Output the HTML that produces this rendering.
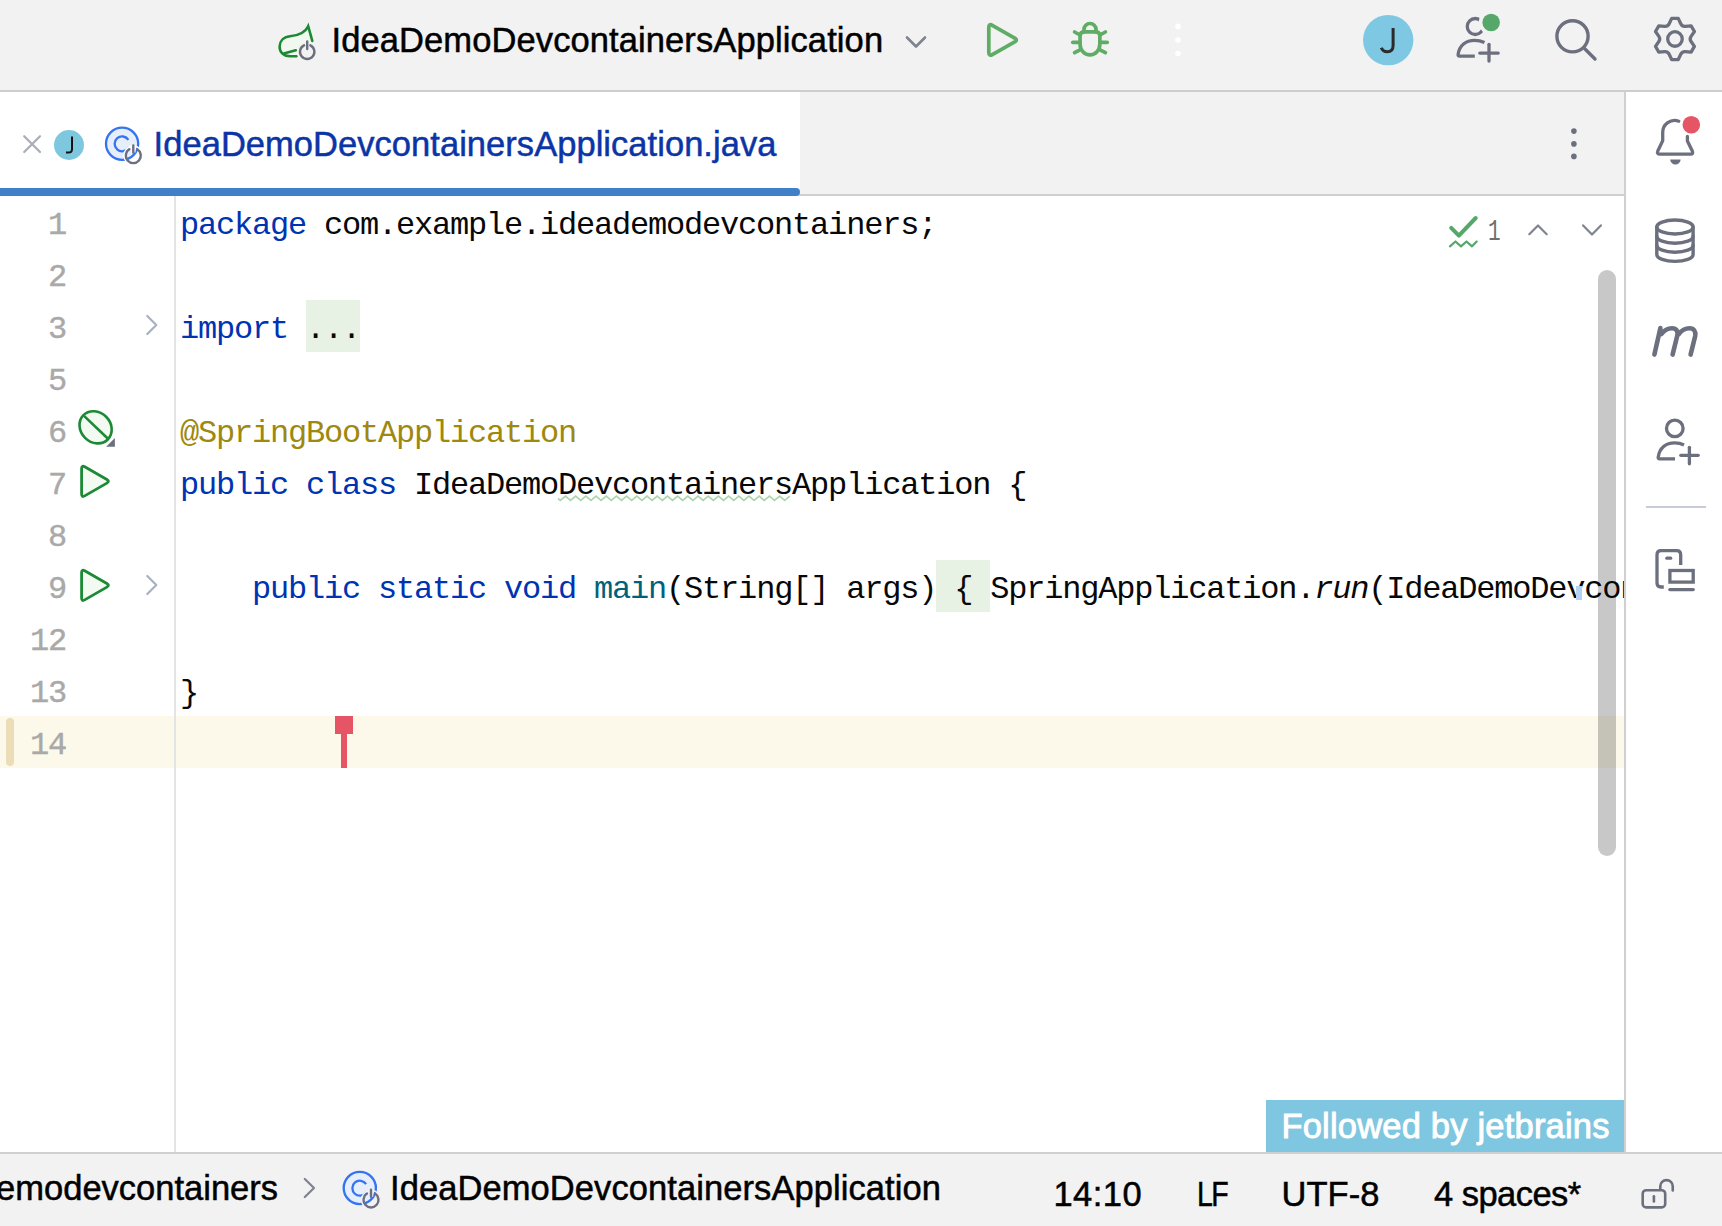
<!DOCTYPE html>
<html><head><meta charset="utf-8">
<style>
html,body{margin:0;padding:0;}
body{width:1722px;height:1226px;position:relative;overflow:hidden;background:#fff;font-family:"Liberation Sans",sans-serif;}
.a{position:absolute;}
.ui{position:absolute;font-family:"Liberation Sans",sans-serif;white-space:nowrap;line-height:1;-webkit-text-stroke:0.5px currentColor;}
.code{position:absolute;left:180px;font-family:"Liberation Mono",monospace;font-size:32px;letter-spacing:-1.2px;white-space:pre;line-height:52px;height:52px;color:#080808;}
.ln{position:absolute;left:30px;width:36px;text-align:right;font-family:"Liberation Mono",monospace;font-size:32px;letter-spacing:-1.2px;white-space:pre;line-height:52px;height:52px;color:#a9a9a9;-webkit-text-stroke:0.4px #a9a9a9;}
.kw{color:#0033b3;}
.an{color:#9e880d;}
.fn{color:#00627a;}
svg{position:absolute;overflow:visible;}
</style></head><body>

<!-- TOP BAR -->
<div class="a" style="left:0;top:0;width:1722px;height:90px;background:#f2f2f2;"></div>
<div class="a" style="left:0;top:90px;width:1722px;height:2px;background:#cdcdcd;"></div>

<!-- TAB BAR -->
<div class="a" style="left:0;top:92px;width:1624px;height:102px;background:#f2f2f2;"></div>
<div class="a" style="left:0;top:92px;width:800px;height:102px;background:#ffffff;"></div>
<div class="a" style="left:0;top:194px;width:1624px;height:2px;background:#d0d0d0;"></div>
<div class="a" style="left:0;top:188px;width:800px;height:8px;background:#3f80c9;border-radius:0 4px 4px 0;"></div>

<!-- RIGHT STRIP -->
<div class="a" style="left:1624px;top:92px;width:2px;height:1060px;background:#d0d0d0;"></div>

<!-- EDITOR -->
<div class="a" style="left:0;top:716px;width:1624px;height:52px;background:#fcf9eb;"></div>
<div class="a" style="left:174px;top:196px;width:2px;height:956px;background:#e4e4e4;"></div>
<div class="a" style="left:6px;top:718px;width:8px;height:48px;background:#ecdcb8;border-radius:4px;"></div>

<!-- CODE -->
<div class="a" style="left:306px;top:300px;width:54px;height:52px;background:#e8f2e4;"></div>
<div class="a" style="left:936px;top:560px;width:54px;height:52px;background:#e8f2e4;"></div>
<div class="a" style="left:0;top:0;width:1624px;height:1152px;overflow:hidden;">
<div class="ln" style="top:200px">1</div>
<div class="ln" style="top:252px">2</div>
<div class="ln" style="top:304px">3</div>
<div class="ln" style="top:356px">5</div>
<div class="ln" style="top:408px">6</div>
<div class="ln" style="top:460px">7</div>
<div class="ln" style="top:512px">8</div>
<div class="ln" style="top:564px">9</div>
<div class="ln" style="top:616px">12</div>
<div class="ln" style="top:668px">13</div>
<div class="ln" style="top:720px">14</div>
<div class="code" style="top:200px"><span class="kw">package</span> com.example.ideademodevcontainers;</div>
<div class="code" style="top:304px"><span class="kw">import</span> ...</div>
<div class="code" style="top:408px"><span class="an">@SpringBootApplication</span></div>
<div class="code" style="top:460px"><span class="kw">public class</span> IdeaDemoDevcontainersApplication {</div>
<div class="code" style="top:564px">    <span class="kw">public static void</span> <span class="fn">main</span>(String[] args) { SpringApplication.<i>run</i>(IdeaDemoDevcontainersApplication.class, args); }</div>
<div class="code" style="top:668px">}</div>
</div>

<!-- STATUS BAR -->
<div class="a" style="left:0;top:1152px;width:1722px;height:2px;background:#d0d0d0;"></div>
<div class="a" style="left:0;top:1154px;width:1722px;height:72px;background:#f2f2f2;"></div>


<!-- UI TEXT -->
<div class="ui" id="t1" style="left:331.5px;letter-spacing:0.1px;top:22.7px;font-size:34.5px;color:#000;">IdeaDemoDevcontainersApplication</div>
<div class="ui" id="t2" style="left:153.6px;letter-spacing:0.04px;top:126.6px;font-size:34.5px;color:#0b35a6;">IdeaDemoDevcontainersApplication.java</div>
<div class="ui" id="t4" style="left:390px;letter-spacing:0.08px;top:1170.8px;font-size:34.5px;color:#000;">IdeaDemoDevcontainersApplication</div>
<div class="ui" id="t3" style="right:1444px;top:1170.8px;font-size:34.5px;color:#000;">ideademodevcontainers</div>
<div class="ui" id="t5" style="left:1053.4px;letter-spacing:0.5px;top:1177.3px;font-size:34.5px;color:#000;">14:10</div>
<div class="ui" id="t6" style="left:1196.8px;letter-spacing:-2px;transform:scaleX(0.825);transform-origin:0 0;top:1177.3px;font-size:34.5px;color:#000;">LF</div>
<div class="ui" id="t7" style="left:1281.6px;top:1177.3px;font-size:34.5px;color:#000;">UTF-8</div>
<div class="ui" id="t8" style="left:1434px;letter-spacing:-0.53px;top:1177.3px;font-size:34.5px;color:#000;">4 spaces*</div>
<div class="a" style="left:1266px;top:1100px;width:358px;height:52px;background:#7fc6e0;"></div>
<div class="ui" id="t9" style="left:1281.4px;letter-spacing:0.2px;top:1109px;font-size:34.5px;-webkit-text-stroke:0.9px #fff;color:#fff;">Followed by jetbrains</div>

<div class="a" id="insp1" style="left:1488.2px;top:214.3px;transform:scaleX(0.7);transform-origin:0 0;font-family:'Liberation Mono',monospace;font-size:30px;line-height:36px;color:#6e6e6e;">1</div>
<!-- ICONS -->
<svg class="a" style="left:0;top:0;" width="1722" height="1226" viewBox="0 0 1722 1226" fill="none" stroke-linecap="round" stroke-linejoin="round">
<!-- spring run config icon -->
<path d="M296.5 56.3 L290 56.3 C283 56 279.6 52 279.6 46.5 C279.6 41.5 283 37 290 36.2 C300 35.3 306 31 308.2 26.2 L312.3 40.9 L300 50 Z" fill="#f0f8f0"/>
<path d="M296.5 56.3 L290 56.3 C283 56 279.6 52 279.6 46.5 C279.6 41.5 283 37 290 36.2 C300 35.3 306 31 308.2 26.2 L312.3 40.9" stroke="#1c8a35" stroke-width="2.6" stroke-linejoin="miter" stroke-miterlimit="12"/>
<path d="M283.8 53.6 L295.8 50.3" stroke="#1c8a35" stroke-width="2.6"/>
<circle cx="307.2" cy="51.8" r="10.2" fill="#f2f2f2"/>
<path d="M304.04 45.33 A7.2 7.2 0 1 0 310.36 45.33" stroke="#6c707e" stroke-width="2.4"/>
<path d="M307.2 41.5 L307.2 49" stroke="#6c707e" stroke-width="2.4"/>
<!-- chevron down -->
<path d="M907 37.5 L916 46.5 L925 37.5" stroke="#7f8390" stroke-width="2.6"/>
<!-- play top -->
<path d="M 992.28 25.37 L 1014.72 38.03 Q 1018.20 40.00 1014.71 41.96 L 992.29 54.54 Q 988.80 56.50 988.80 52.50 L 988.80 27.40 Q 988.80 23.40 992.28 25.37 Z" stroke="#5fad65" stroke-width="3.7"/>
<!-- bug -->
<g stroke="#5fad65" stroke-width="3.7">
<path d="M1080.05 36 Q1080.05 31.9 1084.5 31.9 L1095.5 31.9 Q1099.85 31.9 1099.85 36 L1099.85 44 A9.9 10.9 0 0 1 1080.05 44 Z"/>
<path d="M1084 31.9 L1084 29.5 A6 6 0 0 1 1096 29.5 L1096 31.9"/>
<path d="M1074.6 32 L1080 35"/><path d="M1105.4 32 L1100 35"/>
<path d="M1072.8 42.3 L1080 42.3"/><path d="M1107.2 42.3 L1100 42.3"/>
<path d="M1074.6 52.7 L1080 49.8"/><path d="M1105.4 52.7 L1100 49.8"/>
</g>
<!-- white dots -->
<circle cx="1178" cy="26.4" r="2.8" fill="#fff"/><circle cx="1178" cy="40" r="2.8" fill="#fff"/><circle cx="1178" cy="53.5" r="2.8" fill="#fff"/>
<!-- avatar -->
<circle cx="1388.2" cy="40.1" r="25.2" fill="#7ec8e3"/>
<path d="M1393.1 28 L1393.1 45.5 Q1393.1 51.8 1387.3 51.8 Q1382.8 51.8 1381.3 47.8" stroke="#2b2b2b" stroke-width="3" stroke-linecap="butt"/>
<!-- person add with C -->
<g stroke="#6c707e" stroke-width="3.3">
<circle cx="1475.25" cy="26.5" r="8"/>
<path d="M1474.8 56.1 L1459.5 56.1 Q1457.9 56.1 1458.1 54.5 C1459.3 45.5 1466 40.4 1474.5 40.4 C1478.5 40.4 1481.5 41.2 1484.5 42.6" stroke-linecap="butt"/>
<path d="M1489 44.3 L1489 61"/><path d="M1479.8 53.05 L1498.2 53.05"/>
</g>
<circle cx="1491.15" cy="22.5" r="12.4" fill="#f2f2f2"/>
<circle cx="1491.15" cy="22.5" r="8.75" fill="#55a76a"/>
<!-- search -->
<circle cx="1572.5" cy="36.3" r="15.6" stroke="#6c707e" stroke-width="3.4"/>
<path d="M1584.5 48.5 L1595 59" stroke="#6c707e" stroke-width="3.4"/>
<!-- gear -->
<path d="M 1671.66 18.39 L 1678.26 18.39 L 1680.76 23.71 Q 1682.11 26.58 1685.26 26.31 L 1691.12 25.82 L 1694.42 31.53 L 1691.07 36.36 Q 1689.26 38.96 1691.07 41.56 L 1694.42 46.39 L 1691.12 52.10 L 1685.26 51.61 Q 1682.11 51.34 1680.76 54.21 L 1678.26 59.53 L 1671.66 59.53 L 1669.16 54.21 Q 1667.81 51.34 1664.66 51.61 L 1658.80 52.10 L 1655.50 46.39 L 1658.85 41.56 Q 1660.66 38.96 1658.85 36.36 L 1655.50 31.53 L 1658.80 25.82 L 1664.66 26.31 Q 1667.81 26.58 1669.16 23.71 L 1671.66 18.39 Z" stroke="#6c707e" stroke-width="3.3"/>
<circle cx="1674.96" cy="38.96" r="7.27" stroke="#6c707e" stroke-width="3.3"/>

<!-- TAB: close X -->
<path d="M24.2 136.2 L40 152 M40 136.2 L24.2 152" stroke="#a8adb8" stroke-width="2.2"/>
<!-- J circle -->
<circle cx="69" cy="145" r="15" fill="#7ec8df"/>
<path d="M72 136.5 L72 149 Q72 152.6 68.5 152.6 L66 152.6" stroke="#111" stroke-width="2" stroke-linecap="butt" stroke-linejoin="miter"/>
<!-- class icon tab -->
<g id="cls">
<circle cx="122.1" cy="143.7" r="16.1" fill="#e7eefb" stroke="#3574f0" stroke-width="2.35"/>
<path d="M128.4 139.9 A7.45 7.45 0 1 0 128.3 148" stroke="#3574f0" stroke-width="2.3" stroke-linecap="butt"/>
<circle cx="133.3" cy="155.4" r="9.3" fill="none" stroke="#ffffff" stroke-width="1.6"/>
<path d="M129.3 149.3 A7.5 7.5 0 1 0 137.3 149.3" stroke="#6c707e" stroke-width="2.4"/>
<path d="M133.3 145.4 L133.3 152.5" stroke="#ffffff" stroke-width="4.5" stroke-linecap="butt"/>
<path d="M133.3 145.4 L133.3 152.5" stroke="#6c707e" stroke-width="2.4"/>
</g>
<!-- tab more dots -->
<circle cx="1573.9" cy="131.1" r="2.8" fill="#6c707e"/><circle cx="1573.9" cy="143.9" r="2.8" fill="#6c707e"/><circle cx="1573.9" cy="156.4" r="2.8" fill="#6c707e"/>

<!-- RIGHT STRIP -->
<g stroke="#6c707e" stroke-width="3.3">
<path d="M1678.8 121.2 A12 12 0 0 0 1662.7 132.7 L1662.7 140.8 L1657.8 151 Q1656.6 154.2 1660 154.2 L1690.5 154.2 Q1693.8 154.2 1692.3 151 L1687.4 141 L1687.4 136.5"/>
</g>
<path d="M1670.2 159.4 L1680.6 159.4 A5.2 5.2 0 0 1 1670.2 159.4 Z" fill="#6c707e"/>
<circle cx="1691.3" cy="124.7" r="8.8" fill="#e55566"/>
<!-- db -->
<g stroke="#6c707e" stroke-width="3.4">
<ellipse cx="1674.95" cy="227" rx="18.15" ry="7"/>
<path d="M1656.8 236.2 A18.15 7 0 0 0 1693.1 236.2"/>
<path d="M1656.8 245.2 A18.15 7 0 0 0 1693.1 245.2"/>
<path d="M1656.8 227 L1656.8 254.4 A18.15 7 0 0 0 1693.1 254.4 L1693.1 227"/>
</g>
<!-- m -->
<path d="M1660.4 328.1 L1654.4 354.6 M1661.5 334 C1664 330.5 1668 328.3 1672 328.3 C1676.5 328.3 1678.3 331.5 1677.3 335.5 L1672.6 354.6 M1678.6 334.3 C1681.5 330.5 1685 328.3 1689.5 328.3 C1694 328.3 1696 331.5 1695.2 336 L1690.6 354.6" stroke="#6c707e" stroke-width="4.6"/>
<!-- person add -->
<g stroke="#6c707e" stroke-width="3.3">
<circle cx="1674.8" cy="428.4" r="8.3"/>
<path d="M1675 458.8 L1659.6 458.8 Q1658 458.8 1658.2 457.2 C1659.4 448 1666 442.9 1674.6 442.9 C1678.6 442.9 1681.3 443.6 1684 445" stroke-linecap="butt"/>
<path d="M1689.4 447.3 L1689.4 463.8"/><path d="M1680.8 455.3 L1698.2 455.3"/>
</g>
<!-- separator -->
<rect x="1646" y="506" width="60" height="2" fill="#c8ccd6"/>
<!-- layout icon -->
<g stroke="#6c707e" stroke-width="3.3" stroke-linecap="butt" stroke-linejoin="miter">
<path d="M1663.8 587 L1661 587 Q1657 587 1657 583 L1657 555 Q1657 550.7 1661 550.7 L1676.7 550.7 Q1680.7 550.7 1680.7 555 L1680.7 564.9"/>
<rect x="1669.9" y="570.5" width="23.3" height="11.6"/>
</g>
<path d="M1666.8 558.2 L1670.7 558.2" stroke="#6c707e" stroke-width="3.2"/>
<path d="M1669.9 589.6 L1693.2 589.6" stroke="#6c707e" stroke-width="3.4"/>

<!-- EDITOR gutter -->
<path d="M147.3 316 L156.3 325 L147.3 334" stroke="#a9b0c4" stroke-width="2.2"/>
<path d="M147.3 576 L156.3 585 L147.3 594" stroke="#a9b0c4" stroke-width="2.2"/>
<ellipse cx="95.6" cy="427.3" rx="17.2" ry="14.9" transform="rotate(45 95.6 427.3)" fill="#f2faf2" stroke="#1c8a35" stroke-width="2.6"/>
<path d="M84 415.9 L107.5 438.3" stroke="#1c8a35" stroke-width="2.6" stroke-linecap="butt"/>
<path d="M106.1 446.7 L114.9 438.1 L114.9 446.7 Z" fill="#6c707e"/>
<path d="M 84.72 466.80 L 106.88 479.55 Q 110.00 481.35 106.88 483.15 L 84.72 495.90 Q 81.60 497.70 81.60 494.10 L 81.60 468.60 Q 81.60 465.00 84.72 466.80 Z" fill="#f2faf2" stroke="#1c8a35" stroke-width="2.8"/>
<path d="M 84.72 570.80 L 106.88 583.55 Q 110.00 585.35 106.88 587.15 L 84.72 599.90 Q 81.60 601.70 81.60 598.10 L 81.60 572.60 Q 81.60 569.00 84.72 570.80 Z" fill="#f2faf2" stroke="#1c8a35" stroke-width="2.8"/>
<!-- caret -->
<rect x="335" y="716" width="18" height="18" fill="#e55566"/>
<rect x="341" y="734" width="6" height="34" fill="#e55566"/>
<!-- wavy underline line 7 -->
<path d="M558 498.5 L560.3 500.5 L565.4 496.1 L570.5 500.5 L575.6 496.1 L580.7 500.5 L585.8 496.1 L590.9 500.5 L596.0 496.1 L601.1 500.5 L606.2 496.1 L611.3 500.5 L616.4 496.1 L621.5 500.5 L626.6 496.1 L631.7 500.5 L636.8 496.1 L641.9 500.5 L647.0 496.1 L652.1 500.5 L657.2 496.1 L662.3 500.5 L667.4 496.1 L672.5 500.5 L677.6 496.1 L682.7 500.5 L687.8 496.1 L692.9 500.5 L698.0 496.1 L703.1 500.5 L708.2 496.1 L713.3 500.5 L718.4 496.1 L723.5 500.5 L728.6 496.1 L733.7 500.5 L738.8 496.1 L743.9 500.5 L749.0 496.1 L754.1 500.5 L759.2 496.1 L764.3 500.5 L769.4 496.1 L774.5 500.5 L779.6 496.1 L784.7 500.5 L789.8 496.1" stroke="#abd6ab" stroke-width="1.7" stroke-linecap="butt" stroke-linejoin="miter"/>
<!-- scrollbar -->
<rect x="1598" y="270" width="18" height="586" rx="9" fill="rgba(0,0,0,0.216)"/>
<!-- blue mark line 9 -->
<rect x="1576" y="586" width="6" height="14" fill="#b4d3f3"/>
<!-- inspection widget -->
<path d="M1451.2 227.8 L1458.9 235.6 L1475.7 218" stroke="#55a76a" stroke-width="4"/>
<path d="M1450 246.3 L1455.5 241.5 L1461 246.3 L1466.5 241.5 L1472 246.3 L1476.7 241.5" stroke="#55a76a" stroke-width="2.2"/>
<path d="M1529.3 234.2 L1538 225.5 L1546.7 234.2" stroke="#7f8390" stroke-width="2.2"/>
<path d="M1583.1 225.4 L1592 234.5 L1600.9 225.4" stroke="#7f8390" stroke-width="2.2"/>

<!-- STATUS BAR -->
<path d="M304.8 1179 L314 1188 L304.8 1197" stroke="#7f8390" stroke-width="2.2"/>
<g transform="translate(237.7 1044.3)">
<circle cx="122.1" cy="143.7" r="16.1" fill="#e7eefb" stroke="#3574f0" stroke-width="2.35"/>
<path d="M128.4 139.9 A7.45 7.45 0 1 0 128.3 148" stroke="#3574f0" stroke-width="2.3" stroke-linecap="butt"/>
<circle cx="133.3" cy="155.4" r="9.3" fill="none" stroke="#f2f2f2" stroke-width="1.6"/>
<path d="M129.3 149.3 A7.5 7.5 0 1 0 137.3 149.3" stroke="#6c707e" stroke-width="2.4"/>
<path d="M133.3 145.4 L133.3 152.5" stroke="#f2f2f2" stroke-width="4.5" stroke-linecap="butt"/>
<path d="M133.3 145.4 L133.3 152.5" stroke="#6c707e" stroke-width="2.4"/>
</g>
<!-- lock -->
<g stroke="#6c707e" stroke-width="2.6">
<rect x="1642.7" y="1190.2" width="22.5" height="17.2" rx="3.5"/>
<path d="M1660.3 1189.5 L1660.3 1186.3 A6.22 6.22 0 0 1 1672.75 1186.3 L1672.75 1190.5"/>
<path d="M1653.9 1196.2 L1653.9 1201.4"/>
</g>
</svg>

<!-- /ICONS -->
</body></html>
